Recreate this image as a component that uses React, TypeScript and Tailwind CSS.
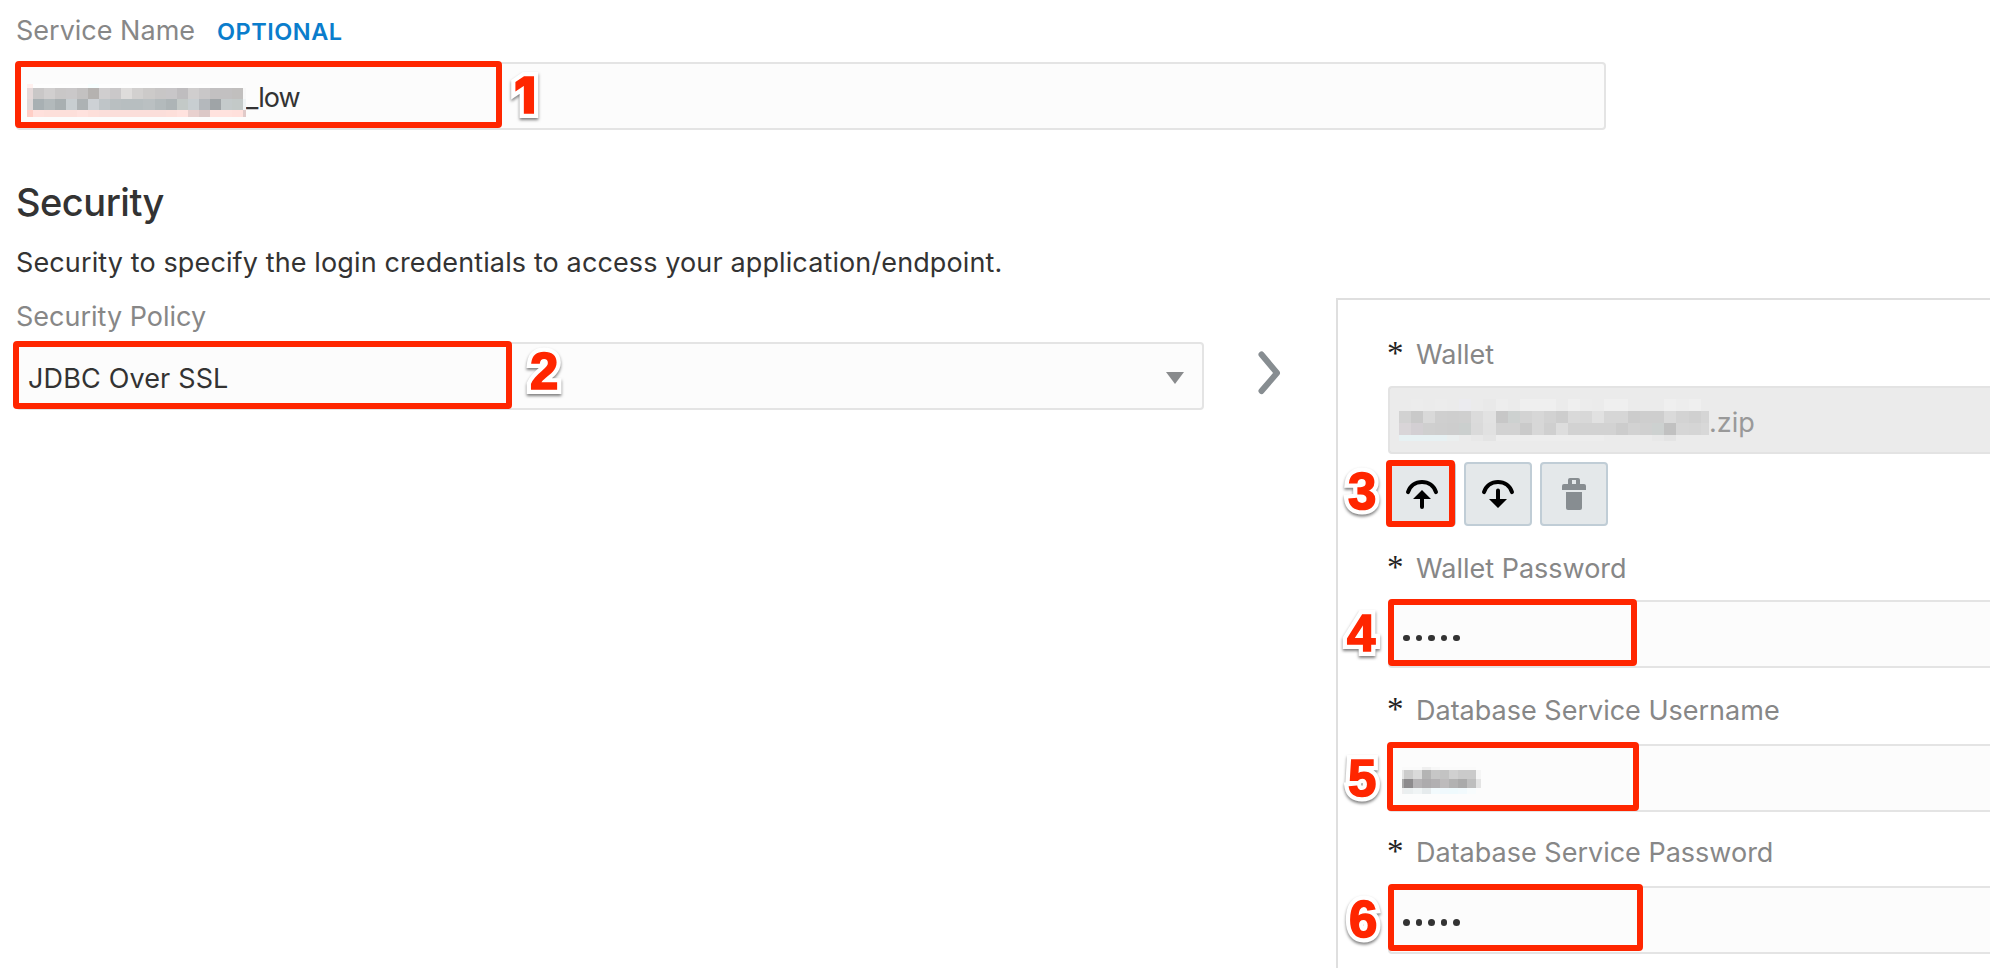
import React from "react";

type Grid = { cols: string; rows: string; cells: string[] };

function Callout({ n, className }: { n: number; className: string }) {
  const face =
    n === 1
      ? "font-[Inter,sans-serif] text-[50px] font-extrabold "
      : "font-['Liberation_Sans',sans-serif] text-[51px] font-bold ";
  return (
    <span
      data-n={n}
      className={
        "absolute isolate leading-[52px] text-[#ff2600] [-webkit-text-stroke:1.6px_#ff2600] drop-shadow-[0_2px_1.5px_rgba(0,0,0,0.5)] before:absolute before:top-0 before:left-0 before:-z-10 before:text-white before:content-[attr(data-n)] before:[-webkit-text-stroke:10px_white] before:[stroke-linejoin:round] " +
        face +
        className
      }
    >
      {n}
    </span>
  );
}

function Mark({ className }: { className: string }) {
  return <span className={"absolute rounded-[4px] border-[6px] border-[#ff2600] " + className} />;
}

function Mosaic({ grid, className }: { grid: Grid; className: string }) {
  return (
    <span
      className={"absolute grid " + className}
      style={{ gridTemplateColumns: grid.cols, gridTemplateRows: grid.rows }}
    >
      {grid.cells.map((c, i) => (
        <span key={i} style={{ backgroundColor: c }} />
      ))}
    </span>
  );
}

const expand = (rows: string[]) => rows.join(" ").split(" ").map((c) => "#" + c);

const serviceGrid: Grid = {
  cols: "6px repeat(19, 11.05px) 3px",
  rows: "4px 11px 11px 7px",
  cells: expand([
    "fff0ee fefefe fefefe fefefe fefefe fefefe f8ffff fefefe fefefe fefefe fefefe fefefe fefefe fefefe fefefe fefefe fefefe fefefe fefefe fefefe fcfcfc",
    "e5d9d9 c9c7c7 d1cfcf c9c7c7 cac8c9 c3c1c1 b5b2b0 d0cecf cac8c9 dedcdb d2d0cf cccac9 c8c6c6 c8c6c8 bfbdbf d0cece c9c7c8 c2c0c1 c2c0c1 c1bfbe f8f8f8",
    "dfd8d8 a8b0b3 bac0c2 b2b9bb a8afb1 c8ced1 adb2b4 cdd1d5 bfc5c8 b9bfc1 b7bec0 b7bec0 bac0c2 b3babc adb4b6 c3c9c7 c8ced1 b4b8bc 9fa4a7 c4cacb c3c9c8 eff3f4",
  ])
    .filter((_, i) => i !== 44)
    .concat(
      expand([
        "ffcec6 ffe0dc fddfda fddfda fddfda ffe2de fddfda fbdeda fbdeda fbdeda fbdeda fbdeda fbdeda fddfda ffe2de e8d0ce dcc8c7 ffe2de ffe2de ffe0dc e0cac9",
      ]),
    ),
};

const walletGrid: Grid = {
  cols: "repeat(25, 12.07px) 8px",
  rows: "12px 12px 12px 6px",
  cells: expand([
    "ebebeb ececec ebebeb ececec ebebeb ebebef ebebeb e9e9e9 ededed ebebeb efefef efefef efefef ebebeb efefef ececec ebebeb efefef efefef ebebeb ebebeb ebebeb efefef ededed efefef ebebeb",
    "d2d2d2 c9c9c9 d9d9d9 cfcfcf cecece cfcfcf dbdbdb e2e2e2 c7c7c7 cdd1d0 d3d3d3 d7d7d7 d2d2d2 cdcdcd d9d9d9 d8d8d8 e1e1e1 d6d6d6 d6d6d6 cccccc cecece cecece dadada d3d3d3 d0d0d0 d5d5d5",
    "d9d5d8 d3cfd3 cfcfcf cecece cdcdcd cbcfce dadada e1e1e1 d2d2d2 d2d2d2 cacaca d7d7d7 cfcfcf dddddd d2d2d2 d2d2d2 d2d2d2 d2d2d2 cccccc d2d2d2 d0d0d0 cdd1d0 c1c1c1 d6d6d6 d5d5d5 d8d8d8",
    "e7f1f3 e7f1f3 e7f1f3 e7f1f3 ebefef ebebeb e8e8e8 e4e4e4 ededed ededed ededed ededed ededed ededed ededed ededed ededed ebebeb ebebeb ebebeb ebebeb e8e8e8 e4e4e4 ebebeb ebebeb ebebeb",
  ]),
};

const userGrid: Grid = {
  cols: "2px repeat(8, 9.05px) 5px",
  rows: "3px 9px 9px 6px",
  cells: expand([
    "fafafa fafafa fafafa efefef f7f7f7 fafafa fafafa fafafa fafafa fcfcfc",
    "e4e4e4 cccccc dadada b4b4b4 c6c6c6 c3c3c3 d0d0d0 cacaca cacaca f5f5f5",
    "aaaaaa 8d8b8d b5b3b5 adabad b2b0b2 bdbbbc b2b2b2 aaaaaa bebebe e4e4e4",
    "eeeeef ebeff0 f0f4f5 e6ebed f2fafd f0f9fd effafd f2fafd f8fcfd fcfcfc",
  ]),
};

const field = "relative flex h-[68px] items-center border-2 border-[#e4e4e4] bg-[#fcfcfc]";

function Dots({ pad }: { pad: string }) {
  return (
    <span aria-label="password" className={"flex gap-[6px] pl-[13px] " + pad}>
      {[0, 1, 2, 3, 4].map((i) => (
        <span key={i} className="size-[6.6px] rounded-full bg-[#333]" />
      ))}
    </span>
  );
}

function RequiredLabel({ text }: { text: string }) {
  return (
    <div className="flex h-[34px] items-center pt-[2px] text-[27px] whitespace-nowrap text-[#878787]">
      <span className="-ml-[1px] h-[34px] w-[29px] font-['Liberation_Serif',serif] text-[33px] leading-[31px] text-[#222]">*</span>
      <span>{text}</span>
    </div>
  );
}

function CloudButton({ down }: { down?: boolean }) {
  return (
    <button className="flex h-16 w-[68px] items-center justify-center rounded-[4px] border-2 border-[#c0cdd6] bg-[#e4e8ea]">
      <svg width="34" height="34" viewBox="0 0 34 34" fill="none">
        <path d="M3 15.2C5 8.6 10.4 4.9 17 4.9S29 8.6 31 15.2" stroke="#000" strokeWidth="4" strokeLinecap="round" />
        {down ? (
          <path d="M15 13.5a2 2 0 0 1 4 0V22h7l-9 9-9-9h7Z" fill="#000" />
        ) : (
          <path d="M17 13l9 9h-7v8a2 2 0 0 1-4 0v-8H8Z" fill="#000" />
        )}
      </svg>
    </button>
  );
}

export default function App() {
  return (
    <div className="relative h-[968px] w-[1990px] overflow-hidden bg-white font-[Inter,sans-serif] text-[27px] text-[#333]">
      <div className="flex h-[62px] items-center pl-4 whitespace-nowrap">
        <span className="text-[#878787]">Service Name</span>
        <span className="ml-[22px] pt-[2px] text-[23.5px] font-semibold tracking-[0.5px] text-[#0a7dcc]">OPTIONAL</span>
      </div>
      <div className={field + " ml-4 w-[1590px] rounded-[4px]"}>
        <Mosaic grid={serviceGrid} className="top-[20px] left-[9px]" />
        <span className="pt-[5px] pl-[228px] tracking-[-1px]">_low</span>
        <Mark className="-top-[3px] -left-[3px] h-[67px] w-[487px]" />
        <Callout n={1} className="top-[5px] left-[496px]" />
      </div>

      <h1 className="mt-[47px] ml-4 h-[51px] text-[38px] leading-[50px] font-medium tracking-[-0.5px]">Security</h1>
      <p className="mt-[18px] ml-4 h-[34px] leading-[34px] tracking-[0.12px]">
        Security to specify the login credentials to access your application/endpoint.
      </p>

      <div className="flex">
        <div className="ml-4 w-[1188px] shrink-0 pt-[20px]">
          <div className="h-[42px] leading-[34px] text-[#878787]">Security Policy</div>
          <div className={field + " rounded-[4px]"}>
            <span className="pt-[6px] pl-[10px] tracking-[0.15px]">JDBC Over SSL</span>
            <svg className="mt-[4px] mr-[18px] ml-auto" width="18" height="12" viewBox="0 0 18 12">
              <path d="M0 0h18L9 12Z" fill="#898b8d" />
            </svg>
            <Mark className="-top-[3px] -left-[5px] h-[68px] w-[499px]" />
            <Callout n={2} className="top-[2px] left-[512px]" />
          </div>
        </div>
        <svg className="mt-[70px] ml-[52px] shrink-0" width="28" height="46" viewBox="0 0 28 46">
          <path d="M5.5 4.5 21 23 5.5 41" fill="none" stroke="#878d91" strokeWidth="6" strokeLinecap="round" strokeLinejoin="round" />
        </svg>
        <section className="mt-[18px] ml-[52px] flex h-[700px] grow flex-col border-t-2 border-l-2 border-[#dfdfdf] pl-[50px]">
          <div className="mt-[37px]">
            <RequiredLabel text="Wallet" />
          </div>
          <div className="relative mt-[15px] flex h-[68px] shrink-0 items-center rounded-l-[4px] border-2 border-r-0 border-[#e3e3e3] bg-[#ebebeb] text-[#999]">
            <Mosaic grid={walletGrid} className="top-[11px] left-[9px]" />
            <span className="pt-[6px] pl-[319px]">.zip</span>
          </div>
          <div className="relative mt-2 flex h-16 shrink-0 gap-2">
            <CloudButton />
            <CloudButton down />
            <button className="flex h-16 w-[68px] items-center justify-center rounded-[4px] border-2 border-[#c0cdd6] bg-[#e4e8ea]">
              <svg width="24" height="32" viewBox="0 0 24 32" fill="#878d91">
                <path fillRule="evenodd" d="M6 6V2q0-2 2-2h8q2 0 2 2v4h4q2 0 2 2v4H0V8q0-2 2-2ZM10 2v4h4V2Z" />
                <path d="M4 14h16v16q0 2-2 2H6q-2 0-2-2Z" />
              </svg>
            </button>
            <Mark className="-top-[2px] -left-[2px] h-[67px] w-[69px]" />
            <Callout n={3} className="top-[4px] -left-[40px]" />
          </div>
          <div className="mt-[25px]">
            <RequiredLabel text="Wallet Password" />
          </div>
          <div className={field + " mt-[15px] shrink-0 rounded-l-[4px] border-r-0"}>
            <Dots pad="pt-[8px]" />
            <Mark className="-top-[3px] -left-[2px] h-[67px] w-[249px]" />
            <Callout n={4} className="top-[6px] -left-[43px]" />
          </div>
          <div className="mt-[25px]">
            <RequiredLabel text="Database Service Username" />
          </div>
          <div className={field + " mt-[17px] shrink-0 rounded-l-[4px] border-r-0"}>
            <Mosaic grid={userGrid} className="top-[21px] left-[12px]" />
            <Mark className="-top-[4px] -left-[3px] h-[69px] w-[252px]" />
            <Callout n={5} className="top-[7px] -left-[42px]" />
          </div>
          <div className="mt-[23px]">
            <RequiredLabel text="Database Service Password" />
          </div>
          <div className={field + " mt-[17px] shrink-0 rounded-l-[4px] border-r-0"}>
            <Dots pad="pt-[5px]" />
            <Mark className="-top-[4px] -left-[2px] h-[67px] w-[255px]" />
            <Callout n={6} className="top-[6px] -left-[41px]" />
          </div>
        </section>
      </div>
    </div>
  );
}
